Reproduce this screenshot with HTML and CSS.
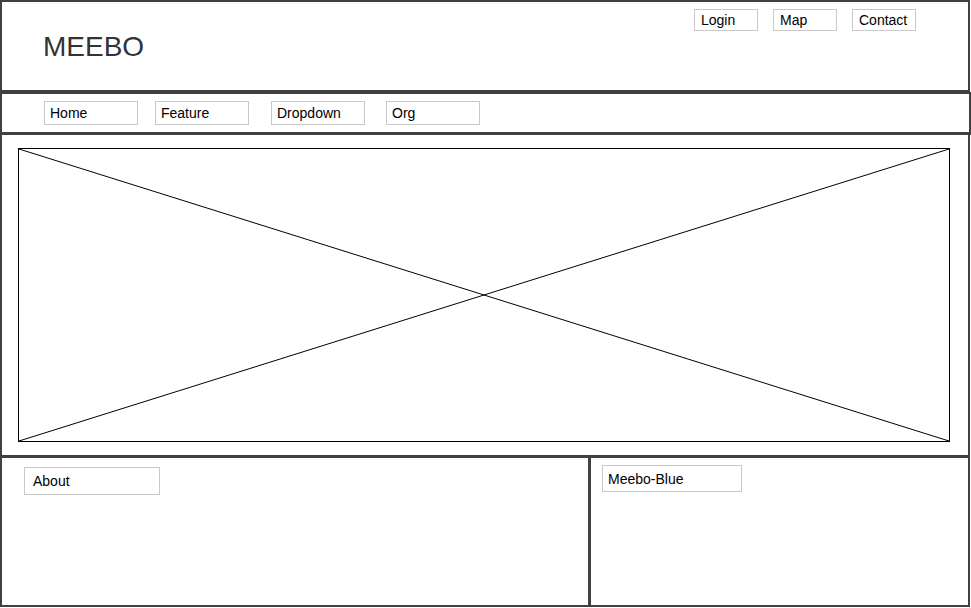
FILE: index.html
```html
<!DOCTYPE html>
<html>
<head>
<meta charset="utf-8">
<link rel="stylesheet" href="styles.css">
</head>
<body>
<div class="page">
  <header class="header">
    <div class="logo">MEEBO</div>
    <div class="top-links">
      <span class="box top-link">Login</span>
      <span class="box top-link">Map</span>
      <span class="box top-link">Contact</span>
    </div>
  </header>
  <nav class="nav">
    <span class="box nav-item">Home</span>
    <span class="box nav-item">Feature</span>
    <span class="box nav-item">Dropdown</span>
    <span class="box nav-item">Org</span>
  </nav>
  <section class="hero">
    <div class="placeholder">
      <svg class="cross" viewBox="0 0 100 100" preserveAspectRatio="none">
        <line x1="0" y1="0" x2="100" y2="100" vector-effect="non-scaling-stroke"/>
        <line x1="0" y1="100" x2="100" y2="0" vector-effect="non-scaling-stroke"/>
      </svg>
    </div>
  </section>
  <footer class="footer">
    <div class="panel panel-left">
      <span class="box about">About</span>
    </div>
    <div class="panel panel-right">
      <span class="box blue">Meebo-Blue</span>
    </div>
  </footer>
</div>
</body>
</html>
```
FILE: styles.css
```css
* { box-sizing: border-box; }
html, body { margin: 0; padding: 0; background: #fff; }
body { font-family: "Liberation Sans", Arial, sans-serif; color: #000; }
.page { width: 971px; }

.box {
  display: block;
  border: 1px solid #c8c8c8;
  font-size: 14px;
  color: #000;
}

.header {
  width: 970px;
  height: 92px;
  border: 2px solid #404040;
  display: flex;
  justify-content: space-between;
  align-items: flex-start;
}
.logo {
  font-size: 28px;
  line-height: 32px;
  color: #333;
  margin: 29px 0 0 41px;
}
.top-links {
  display: flex;
  gap: 15px;
  margin: 7px 52px 0 0;
}
.top-link {
  width: 64px;
  height: 22px;
  line-height: 20px;
  padding-left: 6px;
}

.nav {
  width: 971px;
  height: 43px;
  border: 2px solid #404040;
  border-bottom-width: 3px;
  display: flex;
  align-items: flex-start;
  padding: 7px 0 0 42px;
}
.nav-item {
  width: 94px;
  height: 24px;
  line-height: 22px;
  padding-left: 5px;
}
.nav-item:nth-child(2) { margin-left: 17px; }
.nav-item:nth-child(3) { margin-left: 22px; }
.nav-item:nth-child(4) { margin-left: 21px; }

.hero {
  width: 970px;
  border-left: 2px solid #404040;
  border-right: 2px solid #404040;
  padding: 13px 0 13px 16px;
}
.placeholder {
  width: 932px;
  height: 294px;
  border: 1px solid #000;
}
.cross {
  display: block;
  width: 100%;
  height: 100%;
}
.cross line { stroke: #000; stroke-width: 1; }

.footer {
  display: flex;
  width: 970px;
  height: 152px;
}
.panel {
  border-top: 3px solid #404040;
  border-bottom: 2px solid #404040;
  border-right: 2px solid #404040;
}
.panel-left {
  width: 591px;
  border-left: 2px solid #404040;
  border-right-width: 3px;
  padding: 9px 0 0 22px;
}
.panel-right {
  width: 379px;
  padding: 7px 0 0 11px;
}
.about {
  width: 136px;
  height: 28px;
  line-height: 26px;
  padding-left: 8px;
}
.blue {
  width: 140px;
  height: 27px;
  line-height: 26px;
  padding-left: 5px;
}
```
